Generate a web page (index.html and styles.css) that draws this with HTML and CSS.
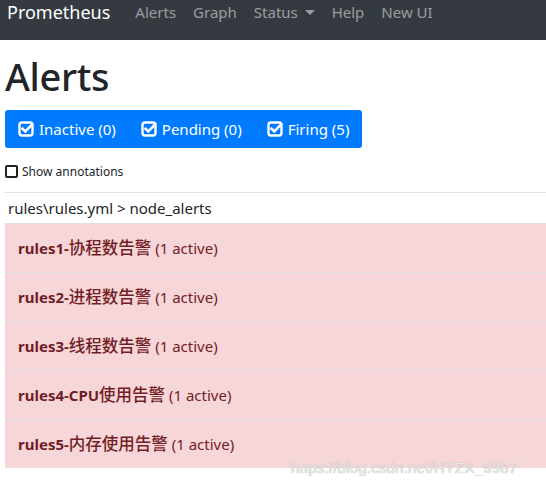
FILE: index.html
```html
<!DOCTYPE html>
<html>
<head>
<meta charset="utf-8">
<link rel="stylesheet" href="styles.css">
</head>
<body>
<nav class="navbar">
  <span class="brand">Prometheus</span>
  <a class="nav-link">Alerts</a>
  <a class="nav-link">Graph</a>
  <a class="nav-link">Status <span class="caret"></span></a>
  <a class="nav-link">Help</a>
  <a class="nav-link">New UI</a>
</nav>
<main class="container">
  <h1 class="title">Alerts</h1>
  <div class="btn-group">
    <span class="btn"><svg class="chk" viewBox="0 0 16 16"><rect x="1.5" y="1.5" width="13" height="13" rx="2.5" fill="none" stroke="#fff" stroke-width="2.4"/><path d="M4.5 7.8 L7.3 10.5 L14 3.5" fill="none" stroke="#fff" stroke-width="2.6" stroke-linecap="square"/></svg>Inactive (0)</span>
    <span class="btn"><svg class="chk" viewBox="0 0 16 16"><rect x="1.5" y="1.5" width="13" height="13" rx="2.5" fill="none" stroke="#fff" stroke-width="2.4"/><path d="M4.5 7.8 L7.3 10.5 L14 3.5" fill="none" stroke="#fff" stroke-width="2.6" stroke-linecap="square"/></svg>Pending (0)</span>
    <span class="btn"><svg class="chk" viewBox="0 0 16 16"><rect x="1.5" y="1.5" width="13" height="13" rx="2.5" fill="none" stroke="#fff" stroke-width="2.4"/><path d="M4.5 7.8 L7.3 10.5 L14 3.5" fill="none" stroke="#fff" stroke-width="2.6" stroke-linecap="square"/></svg>Firing (5)</span>
  </div>
  <label class="annot"><span class="box"></span>Show annotations</label>
  <table class="alerts">
    <tr class="group"><td>rules\rules.yml &gt; node_alerts</td></tr>
    <tr class="danger"><td><b>rules1-<span class="zh">协程数告警</span></b> (1 active)</td></tr>
    <tr class="danger"><td><b>rules2-<span class="zh">进程数告警</span></b> (1 active)</td></tr>
    <tr class="danger"><td><b>rules3-<span class="zh">线程数告警</span></b> (1 active)</td></tr>
    <tr class="danger"><td><b>rules4-CPU<span class="zh">使用告警</span></b> (1 active)</td></tr>
    <tr class="danger"><td><b>rules5-<span class="zh">内存使用告警</span></b> (1 active)</td></tr>
  </table>
</main>
<div class="watermark">https://blog.csdn.net/HYZX_9987</div>
</body>
</html>
```
FILE: styles.css
```css
html, body { margin: 0; padding: 0; overflow: hidden; }
body {
  font-family: "Noto Sans", "Noto Sans CJK SC", sans-serif;
  color: #212529;
  background: #fff;
  width: 546px;
  height: 488px;
  position: relative;
}
.navbar {
  background: #343a40;
  height: 40px;
  display: flex;
  align-items: flex-start;
  padding: 0 0 0 7px;
  box-sizing: border-box;
}
.brand {
  color: #fff;
  font-size: 18px;
  line-height: 25px;
  margin-right: 25px;
}
.nav-link {
  color: rgba(255,255,255,.5);
  font-size: 15px;
  line-height: 25px;
  margin-right: 17px;
}
.caret {
  display: inline-block;
  width: 0; height: 0;
  border-top: 5px solid rgba(255,255,255,.5);
  border-left: 5px solid transparent;
  border-right: 5px solid transparent;
  vertical-align: 3px;
  margin-left: 3px;
}
.container { padding: 0 0 0 5px; }
.title {
  font-size: 38px;
  font-weight: 500;
  margin: 0;
  line-height: 46px;
  padding-top: 13px;
  height: 70px;
  box-sizing: border-box;
  letter-spacing: -0.3px;
}
.btn-group {
  display: inline-flex;
  background: #007bff;
  border-radius: 3px;
  height: 38px;
  align-items: center;
  padding: 0 2px 0 13px;
}
.btn {
  color: #fff;
  font-size: 15px;
  display: inline-flex;
  align-items: center;
  margin-right: 25px;
}
.btn:last-child { margin-right: 11px; }
.chk { width: 16px; height: 16px; margin-right: 5px; }
.annot {
  display: flex;
  align-items: center;
  font-size: 12px;
  margin-top: 16px;
  height: 14px;
}
.box {
  width: 9px; height: 9px;
  border: 2px solid #222;
  border-radius: 2px;
  margin-right: 4px;
}
.alerts {
  margin-top: 14px;
  border-collapse: collapse;
  width: 541px;
}
.alerts td { padding: 0; }
.group td {
  border-top: 1px solid #dee2e6;
  height: 30px;
  padding-left: 3px;
  font-size: 15px;
}
.danger td {
  background: #f7d6d9;
  color: #721c24;
  border-top: 1px solid #dcdfe4;
  height: 48px;
  line-height: 20px;
  padding-left: 13px;
  padding-top: 0;
  font-size: 15px;
}
.danger b { font-weight: 700; }
.zh { font-size: 16.5px; font-weight: 500; line-height: 20px; }
.watermark {
  position: absolute;
  left: 291px;
  top: 459px;
  font-family: "Liberation Sans", sans-serif;
  font-size: 15px;
  color: #eaeaea;
  text-shadow: 0 0 1px #999;
  letter-spacing: 0.2px;
}
```
